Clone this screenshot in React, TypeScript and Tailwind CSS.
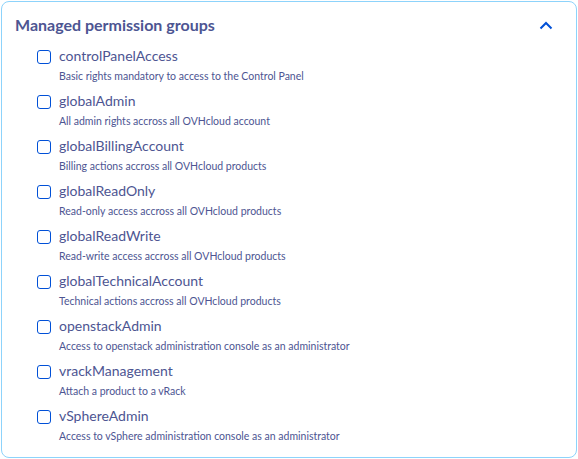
const groups = [
  { name: "controlPanelAccess", desc: "Basic rights mandatory to access to the Control Panel" },
  { name: "globalAdmin", desc: "All admin rights accross all OVHcloud account" },
  { name: "globalBillingAccount", desc: "Billing actions accross all OVHcloud products" },
  { name: "globalReadOnly", desc: "Read-only access accross all OVHcloud products" },
  { name: "globalReadWrite", desc: "Read-write access accross all OVHcloud products" },
  { name: "globalTechnicalAccount", desc: "Technical actions accross all OVHcloud products" },
  { name: "openstackAdmin", desc: "Access to openstack administration console as an administrator" },
  { name: "vrackManagement", desc: "Attach a product to a vRack" },
  { name: "vSphereAdmin", desc: "Access to vSphere administration console as an administrator" },
];

export default function App() {
  return (
    <div className="w-[578px] h-[459px] bg-white p-px font-['Lato',sans-serif] text-[#4d5592]">
      <div className="h-full rounded-lg border border-[#8dd3fb] px-[13px] pt-[11px]">
        <div className="flex h-6 items-center justify-between">
          <h2 className="text-[16px] font-bold leading-6">Managed permission groups</h2>
          <svg width="14" height="9" viewBox="0 0 14 9" className="mr-[10px]">
            <path d="M1.5 7.5 L7 2 L12.5 7.5" fill="none" stroke="#0050d7" strokeWidth="2" />
          </svg>
        </div>
        <ul className="mt-[9px] ml-[22px] flex flex-col gap-[7px]">
          {groups.map((g) => (
            <li key={g.name} className="grid grid-cols-[14px_1fr] gap-x-2">
              <span className="mt-[4px] h-[14px] w-[14px] rounded-[3px] border-[1.5px] border-[#0050d7] bg-white" />
              <span className="text-[14px] leading-5">{g.name}</span>
              <p className="col-start-2 mt-[2px] text-[10.5px] leading-4">{g.desc}</p>
            </li>
          ))}
        </ul>
      </div>
    </div>
  );
}
